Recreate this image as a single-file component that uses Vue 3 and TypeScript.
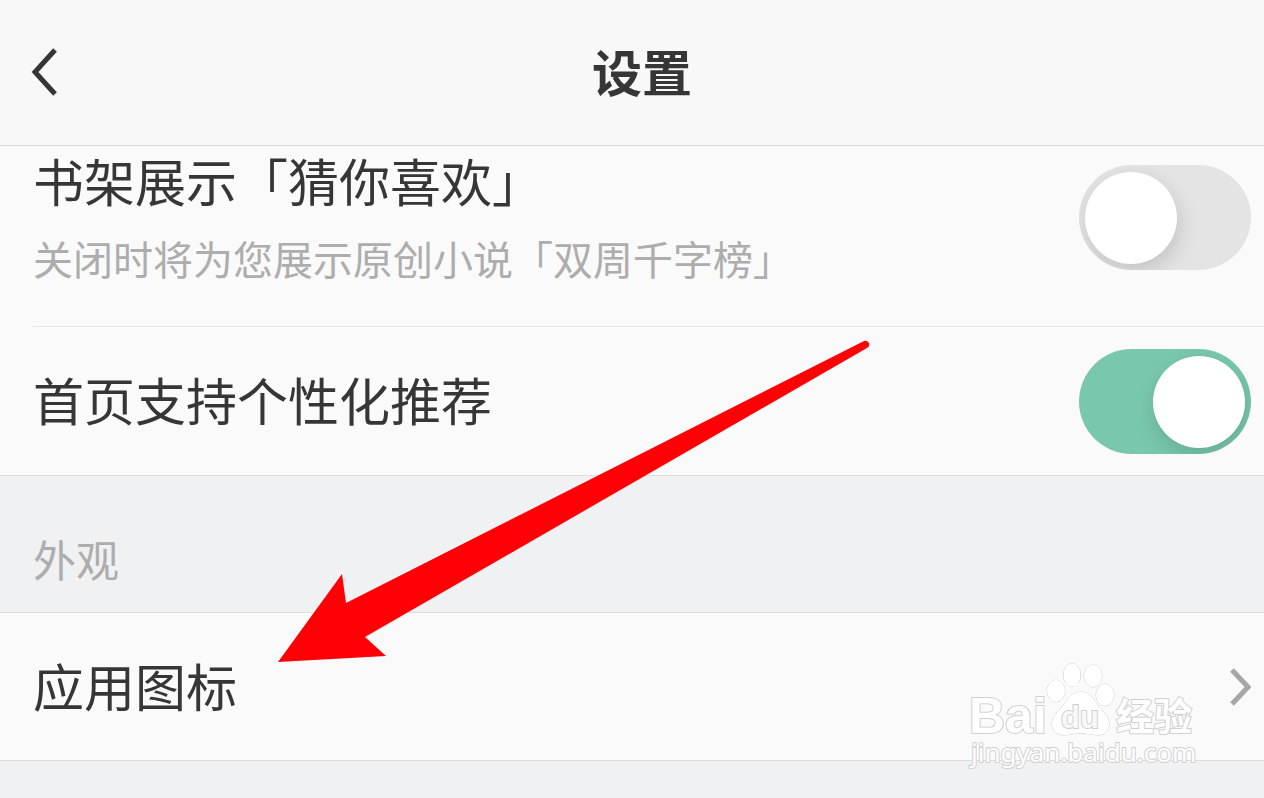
<script setup lang="ts">
import { ref } from 'vue'

const showSuggestions = ref(false)
const personalized = ref(true)
</script>

<template>
  <main class="page">
    <header class="bar">
      <button class="back" type="button" aria-label="返回">
        <svg width="28" height="52" viewBox="0 0 28 52" aria-hidden="true">
          <path d="M25 4 L5 26 L25 48" fill="none" stroke="currentColor" stroke-width="5" />
        </svg>
      </button>
      <h1 class="title">设置</h1>
    </header>

    <section class="group">
      <div class="row row-tall">
        <div class="texts">
          <label class="label" for="suggest">书架展示「猜你喜欢」</label>
          <p class="hint">关闭时将为您展示原创小说「双周千字榜」</p>
        </div>
        <input id="suggest" v-model="showSuggestions" class="switch" type="checkbox" role="switch" />
      </div>
      <div class="row row-mid">
        <label class="label" for="personal">首页支持个性化推荐</label>
        <input id="personal" v-model="personalized" class="switch" type="checkbox" role="switch" />
      </div>
    </section>

    <h2 class="heading">外观</h2>

    <section class="group">
      <a class="row row-link" href="#icon">
        <span class="label">应用图标</span>
        <svg width="22" height="42" viewBox="0 0 22 42" aria-hidden="true">
          <path d="M3 4 L19 21 L3 38" fill="none" stroke="#a6a6a6" stroke-width="5" />
        </svg>
      </a>
    </section>

    <svg class="arrow" width="600" height="330" viewBox="0 0 600 330" aria-hidden="true">
      <path
        d="M8 322 L72 234 L76 263 L594 1 Q597 0 599 3 Q600 6 597 8 L95 297 L116 316 Z"
        fill="#ff0006"
      />
    </svg>

    <svg class="mark" width="236" height="120" viewBox="0 0 236 120" role="img" aria-label="Baidu 经验">
      <g class="ink">
        <text class="latin" x="3" y="75">Bai</text>
        <ellipse cx="90" cy="33" rx="9" ry="11" />
        <ellipse cx="106" cy="17" rx="8.5" ry="11.5" />
        <ellipse cx="127" cy="18" rx="9" ry="11" />
        <ellipse cx="139" cy="37" rx="9" ry="11" />
        <path
          d="M115 34 C105 34 101 42 97 48 C92 54 86 57 86 66 C86 73 91 77 98 77 C105 77 108 75 115 75 C122 75 125 77 132 77 C139 77 143 73 143 66 C143 57 137 54 132 48 C128 42 125 34 115 34 Z"
        />
        <text class="du" x="95" y="70">du</text>
        <text class="han" x="150" y="72">经验</text>
        <text class="url" x="5" y="104">jingyan.baidu.com</text>
      </g>
    </svg>
  </main>
</template>

<style>
body {
  margin: 0;
  background: #eff1f3;
}
</style>

<style scoped>
.page {
  position: relative;
  min-height: 100vh;
  overflow: hidden;
  box-sizing: border-box;
  background: #eff1f3;
  color: #363636;
  font-family: "Noto Sans CJK SC", sans-serif;
}

.bar {
  display: grid;
  grid-template-columns: 80px 1fr 60px;
  align-items: center;
  height: 143px;
  padding-bottom: 2px;
  background: #f8f8f8;
  border-bottom: 1px solid #dcdcdc;
}

.back {
  display: flex;
  justify-self: start;
  margin-left: 30px;
  padding: 0;
  border: 0;
  background: none;
  color: #363636;
}

.title {
  margin: 0;
  padding-bottom: 4px;
  text-align: center;
  font-size: 50px;
  line-height: 72px;
  font-weight: 700;
}

.group {
  background: #fafafa;
  border-bottom: 1px solid #dcdee0;
}

.row {
  display: flex;
  align-items: center;
  justify-content: space-between;
  margin-left: 33px;
  padding-right: 13px;
  color: inherit;
  text-decoration: none;
}

.row-tall {
  height: 180px;
  align-items: flex-start;
  border-bottom: 1px solid #e6e6e6;
}

.row-tall .switch {
  margin-top: 19px;
}

.row-mid {
  height: 148px;
}

.row-link {
  height: 147px;
}

.label {
  padding-bottom: 4px;
  font-size: 51px;
  line-height: 68px;
  white-space: nowrap;
}

.texts {
  display: flex;
  flex-direction: column;
  gap: 10px;
}

.hint {
  margin: 0;
  color: #adadad;
  font-size: 40px;
  line-height: 60px;
  white-space: nowrap;
}

.heading {
  height: 137px;
  box-sizing: border-box;
  margin: 0;
  padding: 50px 0 0 33px;
  border-bottom: 1px solid #dcdee0;
  color: #adadad;
  font-size: 43px;
  line-height: 64px;
  font-weight: 400;
}

.switch {
  appearance: none;
  flex: none;
  width: 172px;
  height: 105px;
  box-sizing: border-box;
  margin: 0;
  padding: 7px 6px;
  overflow: hidden;
  border-radius: 53px;
  background: #e4e4e4;
}

.switch::before {
  content: "";
  display: block;
  width: 92px;
  height: 92px;
  border-radius: 50%;
  background: #fff;
  box-shadow: 2px 8px 22px rgba(0, 0, 0, 0.15);
}

.switch:checked {
  background: #79c8ae;
}

.switch:checked::before {
  margin-left: 68px;
}

.arrow {
  position: absolute;
  left: 270px;
  top: 340px;
  pointer-events: none;
}

.mark {
  position: absolute;
  right: 62px;
  top: 658px;
  pointer-events: none;
}

.ink {
  fill: #fff;
  stroke: #d0d0d0;
  stroke-width: 1px;
  paint-order: stroke;
}

.latin,
.du {
  font-family: "Liberation Sans", sans-serif;
  font-weight: 700;
}

.latin {
  font-size: 50px;
  stroke-width: 2px;
}

.du {
  font-size: 31px;
  fill: #f8f8f8;
  stroke-width: 2px;
}

.han {
  font-size: 38px;
  font-weight: 700;
  stroke-width: 2px;
}

.url {
  font-family: "Noto Sans", sans-serif;
  font-size: 26px;
  stroke-width: 2px;
}
</style>
